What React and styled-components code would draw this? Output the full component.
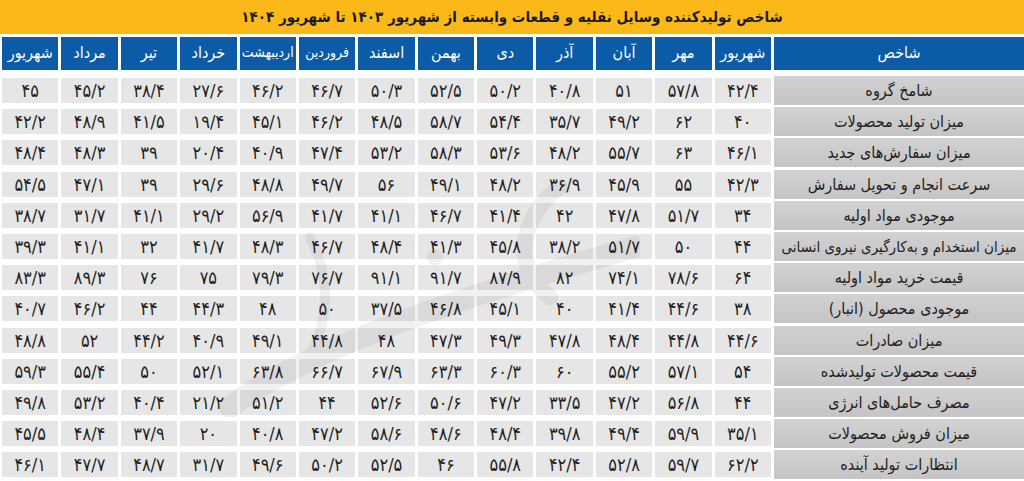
import styled, { createGlobalStyle } from 'styled-components';

const GlobalStyle = createGlobalStyle`
  html, body {
    margin: 0;
    padding: 0;
    background: #ffffff;
  }
  body {
    font-family: "DejaVu Sans", "Noto Sans", sans-serif;
  }
`;

const months = [
  'شهریور', 'مهر', 'آبان', 'آذر', 'دی', 'بهمن', 'اسفند',
  'فروردین', 'اردیبهشت', 'خرداد', 'تیر', 'مرداد', 'شهریور',
];

const rows = [
  ['شامخ گروه', '۴۲/۴', '۵۷/۸', '۵۱', '۴۰/۸', '۵۰/۲', '۵۲/۵', '۵۰/۳', '۴۶/۷', '۴۶/۲', '۲۷/۶', '۳۸/۴', '۴۵/۲', '۴۵'],
  ['میزان تولید محصولات', '۴۰', '۶۲', '۴۹/۲', '۳۵/۷', '۵۴/۴', '۵۸/۷', '۴۸/۵', '۴۶/۲', '۴۵/۱', '۱۹/۴', '۴۱/۵', '۴۸/۹', '۴۲/۲'],
  ['میزان سفارش‌های جدید', '۴۶/۱', '۶۳', '۵۵/۷', '۴۸/۲', '۵۳/۶', '۵۸/۳', '۵۳/۲', '۴۷/۴', '۴۰/۹', '۲۰/۴', '۳۹', '۴۸/۳', '۴۸/۴'],
  ['سرعت انجام و تحویل سفارش', '۴۲/۳', '۵۵', '۴۵/۹', '۳۶/۹', '۴۸/۲', '۴۹/۱', '۵۶', '۴۹/۷', '۴۸/۸', '۲۹/۶', '۳۹', '۴۷/۱', '۵۴/۵'],
  ['موجودی مواد اولیه', '۳۴', '۵۱/۷', '۴۷/۸', '۴۲', '۴۱/۴', '۴۶/۷', '۴۱/۱', '۴۱/۷', '۵۶/۹', '۲۹/۲', '۴۱/۱', '۳۱/۷', '۳۸/۷'],
  ['میزان استخدام  و به‌کارگیری نیروی انسانی', '۴۴', '۵۰', '۵۱/۷', '۳۸/۲', '۴۵/۸', '۴۱/۳', '۴۸/۴', '۴۶/۷', '۴۸/۳', '۴۱/۷', '۳۲', '۴۱/۱', '۳۹/۳'],
  ['قیمت خرید مواد اولیه', '۶۴', '۷۸/۶', '۷۴/۱', '۸۲', '۸۷/۹', '۹۱/۷', '۹۱/۱', '۷۶/۷', '۷۹/۳', '۷۵', '۷۶', '۸۹/۳', '۸۳/۳'],
  ['موجودی محصول (انبار)', '۳۸', '۴۴/۶', '۴۱/۴', '۴۰', '۴۵/۱', '۴۶/۸', '۳۷/۵', '۵۰', '۴۸', '۴۴/۳', '۴۴', '۴۶/۲', '۴۰/۷'],
  ['میزان صادرات', '۴۴/۶', '۴۴/۸', '۴۸/۴', '۴۷/۸', '۴۹/۳', '۴۷/۳', '۴۸', '۴۴/۸', '۴۹/۱', '۴۰/۹', '۴۴/۲', '۵۲', '۴۸/۸'],
  ['قیمت محصولات تولیدشده', '۵۴', '۵۷/۱', '۵۵/۲', '۶۰', '۶۰/۳', '۶۳/۳', '۶۷/۹', '۶۶/۷', '۶۳/۸', '۵۲/۱', '۵۰', '۵۵/۴', '۵۹/۳'],
  ['مصرف حامل‌های انرژی', '۴۴', '۵۶/۸', '۴۷/۲', '۳۳/۵', '۴۷/۲', '۵۰/۶', '۵۲/۶', '۴۴', '۵۱/۲', '۲۱/۲', '۴۰/۴', '۵۳/۲', '۴۹/۸'],
  ['میزان فروش محصولات', '۳۵/۱', '۵۹/۹', '۴۹/۴', '۳۹/۸', '۴۸/۴', '۴۸/۶', '۵۸/۶', '۴۷/۲', '۴۰/۸', '۲۰', '۳۷/۹', '۴۸/۴', '۴۵/۵'],
  ['انتظارات تولید آینده', '۶۲/۲', '۵۹/۷', '۵۲/۸', '۴۲/۴', '۵۵/۸', '۴۶', '۵۲/۵', '۵۰/۲', '۴۹/۶', '۳۱/۷', '۴۸/۷', '۴۷/۷', '۴۶/۱'],
];

export default function App() {
  return (
    <>
      <GlobalStyle />
      <Page>
        <TitleBar>
          شاخص تولیدکننده وسایل نقلیه و قطعات وابسته از شهریور ۱۴۰۳ تا شهریور ۱۴۰۴
        </TitleBar>
        <Table>
          <HeaderRow>
            <HeadCell>شاخص</HeadCell>
            {months.map((m, i) => (
              <HeadCell key={i} $tight={m.length > 6}>{m}</HeadCell>
            ))}
          </HeaderRow>
          {rows.map((r, i) => (
            <Row key={i}>
              <LabelCell $long={r[0].length > 30}>{r[0]}</LabelCell>
              {r.slice(1).map((v, j) => (
                <ValueCell key={j}>{v}</ValueCell>
              ))}
            </Row>
          ))}
          <Watermark viewBox="0 0 420 240" aria-hidden="true">
            <path d="M10 230 C 90 170, 240 120, 415 70" stroke="#000" strokeWidth="22" fill="none" strokeLinecap="round" />
            <path d="M90 60 C 110 100, 110 140, 90 180" stroke="#000" strokeWidth="10" fill="none" strokeLinecap="round" />
            <path d="M340 10 C 300 40, 290 90, 330 120" stroke="#000" strokeWidth="16" fill="none" strokeLinecap="round" />
            <circle cx="215" cy="80" r="8" fill="#000" />
          </Watermark>
        </Table>
      </Page>
    </>
  );
}

const Page = styled.div`
  width: 1024px;
  height: 481px;
  overflow: hidden;
  background: #ffffff;
  direction: rtl;
`;

const TitleBar = styled.div`
  height: 34px;
  background: #fbb819;
  display: flex;
  align-items: center;
  justify-content: center;
  font-family: "DejaVu Sans Condensed", "DejaVu Sans", sans-serif;
  font-weight: bold;
  font-size: 15px;
  color: #1b1b1b;
  white-space: nowrap;
  margin-bottom: 3px;
`;

const Table = styled.div`
  position: relative;
  padding: 0 0 0 2px;
`;

const HeaderRow = styled.div`
  display: grid;
  grid-template-columns: 250px repeat(13, 1fr);
  column-gap: 3px;
  height: 33px;
  margin-bottom: 5px;
`;

const HeadCell = styled.div`
  background: #0b5ba6;
  color: #ffffff;
  display: flex;
  align-items: center;
  justify-content: center;
  font-family: "DejaVu Sans Condensed", "DejaVu Sans", sans-serif;
  font-size: ${(p) => (p.$tight ? '14px' : '16px')};
  letter-spacing: ${(p) => (p.$tight ? '-0.5px' : '0')};
  white-space: nowrap;
  padding-bottom: 3px;
  box-sizing: border-box;
`;

const Row = styled.div`
  display: grid;
  grid-template-columns: 250px repeat(13, 1fr);
  column-gap: 3px;
  align-items: center;
  height: 31.2px;
`;

const LabelCell = styled.div`
  height: 29px;
  background: linear-gradient(#d2d2d2, #c4c4c4);
  color: #222222;
  display: flex;
  align-items: center;
  justify-content: center;
  font-family: "DejaVu Sans Condensed", "DejaVu Sans", sans-serif;
  font-size: ${(p) => (p.$long ? '15px' : '16px')};
  white-space: nowrap;
  letter-spacing: -0.2px;
  overflow: hidden;
`;

const ValueCell = styled.div`
  height: 25px;
  background: #e6e6e7;
  color: #1e1e1e;
  display: flex;
  align-items: center;
  justify-content: center;
  font-family: "DejaVu Sans Condensed", "DejaVu Sans", sans-serif;
  font-size: 18px;
`;

const Watermark = styled.svg`
  position: absolute;
  left: 220px;
  top: 140px;
  width: 420px;
  height: 240px;
  opacity: 0.05;
  pointer-events: none;
`;
